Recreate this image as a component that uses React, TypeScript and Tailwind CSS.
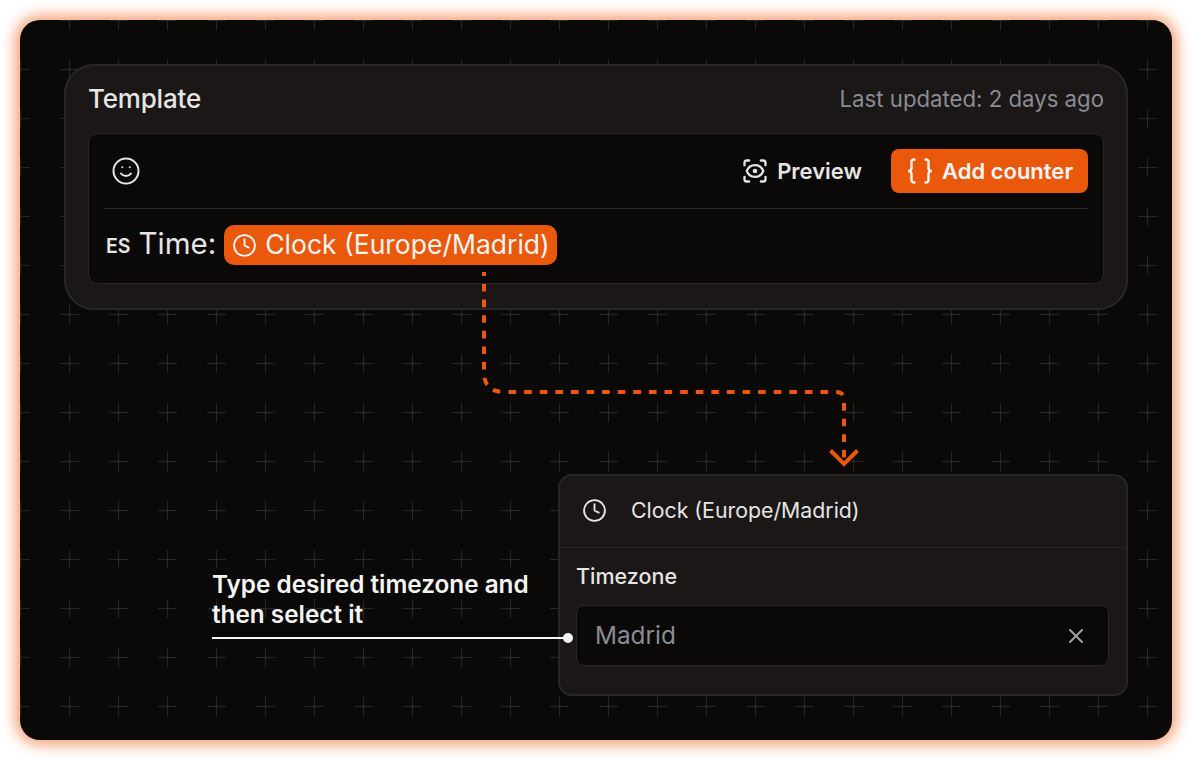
import { Clock, ScanEye, Smile, X } from "lucide-react";

const font = { fontFamily: "Inter, 'Liberation Sans', sans-serif" };

function GridPattern() {
  return (
    <svg className="absolute inset-0 h-full w-full" viewBox="20 20 1152 720" aria-hidden="true">
      <defs>
        <pattern id="plus" x="-4" y="-4" width="49" height="49" patternUnits="userSpaceOnUse">
          <path d="M15 24.5H34M24.5 15V34" stroke="#27272a" strokeWidth="1" fill="none" />
          <circle cx="24.5" cy="24.5" r="1.6" fill="#27272a" />
        </pattern>
      </defs>
      <rect x="20" y="20" width="1152" height="720" fill="url(#plus)" />
    </svg>
  );
}

function Connector() {
  return (
    <svg className="pointer-events-none absolute inset-0 z-10 h-full w-full" viewBox="20 20 1152 720" aria-hidden="true">
      <path
        d="M484 272V372Q484 392 504 392H836Q844 392 844 400V460"
        fill="none"
        stroke="#ea580c"
        strokeWidth="4"
        strokeDasharray="7.6 8"
        strokeDashoffset="3.6"
      />
      <path d="M830.5 450.5L844 464L857.5 450.5" fill="none" stroke="#ea580c" strokeWidth="4" />
    </svg>
  );
}

function Braces() {
  return (
    <svg width="26" height="26" viewBox="0 0 26 26" fill="none" stroke="currentColor" strokeWidth="2.4" strokeLinecap="round" strokeLinejoin="round">
      <path d="M7.5 1.5H7Q4.5 1.5 4.5 4V10Q4.5 12.5 2 13Q4.5 13.5 4.5 16V22Q4.5 24.5 7 24.5H7.5" />
      <path d="M18.5 1.5H19Q21.5 1.5 21.5 4V10Q21.5 12.5 24 13Q21.5 13.5 21.5 16V22Q21.5 24.5 19 24.5H18.5" />
    </svg>
  );
}

export default function App() {
  return (
    <div className="min-h-[760px] bg-white p-5" style={font}>
      <div className="relative flex h-[720px] flex-col overflow-hidden rounded-[20px] bg-[#0a0908] px-[44px] pt-[44px] shadow-[0_0_14px_5px_rgba(234,88,12,0.55)]">
        <GridPattern />
        <div className="relative h-[246px] rounded-[30px] border-2 border-[#27272a] bg-[#1a1716] px-[22px]">
          <div className="flex h-[67px] items-center justify-between pb-[2px]">
            <span className="text-[26px] font-medium tracking-[-0.2px] text-[#e7e5e4]">Template</span>
            <span className="text-[22.2px] text-[#8b8b94]">Last updated: 2 days ago</span>
          </div>
          <div className="h-[151px] rounded-[10px] border border-[#27272a] bg-[#0a0908] px-[15px]">
            <div className="flex h-[75px] items-center justify-between border-b border-[#27272a]">
              <Smile className="ml-[7px] text-[#e7e5e4]" size={30} strokeWidth={1.6} />
              <div className="flex items-center">
                <ScanEye className="text-[#e7e5e4]" size={28} strokeWidth={2} />
                <span className="ml-[8px] text-[22px] font-semibold text-[#e7e5e4]">Preview</span>
                <button className="ml-[29px] flex h-[44px] w-[197px] items-center gap-[9px] rounded-[8px] bg-[#ea580c] pl-[16px] text-[22px] font-semibold text-[#f5f5f4]">
                  <Braces />
                  Add counter
                </button>
              </div>
            </div>
            <div className="flex h-[74px] items-center pb-[2px]">
              <span className="ml-[2px] mt-[4px] text-[19.5px] font-semibold text-[#e7e5e4]">ES</span>
              <span className="mb-[3px] ml-[8px] text-[29.5px] text-[#e7e5e4]">Time:</span>
              <span className="ml-[8px] flex h-[40px] w-[333px] items-center gap-[8px] rounded-[10px] bg-[#ea580c] pl-[8px] text-[26.5px] text-[#f5f5f4]">
                <Clock size={25} strokeWidth={1.8} />
                Clock (Europe/Madrid)
              </span>
            </div>
          </div>
        </div>
        <div className="relative mt-[164px] flex items-end justify-end">
          <div className="relative z-10 mb-[53px] mr-[-15px] w-[361px]">
            <p className="text-[24.3px] font-semibold leading-[30px] text-[#f5f5f4]">
              Type desired timezone and
              <br />
              then select it
            </p>
            <div className="mt-[4px] flex h-[10px] items-center">
              <div className="h-[2px] flex-1 bg-[#f5f5f4]" />
              <div className="ml-[-1px] size-[10px] rounded-full bg-[#f5f5f4]" />
            </div>
          </div>
          <div className="h-[222px] w-[570px] rounded-[14px] border-2 border-[#27272a] bg-[#1a1716]">
            <div className="flex h-[72px] items-center border-b border-[#27272a] pb-[2px] pl-[22px]">
              <Clock className="text-[#e7e5e4]" size={25} strokeWidth={1.8} />
              <span className="ml-[24px] text-[21.3px] text-[#e7e5e4]">Clock (Europe/Madrid)</span>
            </div>
            <div className="pl-[16px] pr-[17px]">
              <div className="flex h-[57px] items-center text-[21.5px] font-medium text-[#e7e5e4]">Timezone</div>
              <div className="flex h-[61px] items-center justify-between rounded-[8px] border border-[#27272a] bg-[#0a0908] pl-[18px] pr-[20px]">
                <span className="text-[24.3px] text-[#8b8b94]">Madrid</span>
                <X className="text-[#a1a1aa]" size={24} strokeWidth={1.9} />
              </div>
            </div>
          </div>
        </div>
        <Connector />
      </div>
    </div>
  );
}
